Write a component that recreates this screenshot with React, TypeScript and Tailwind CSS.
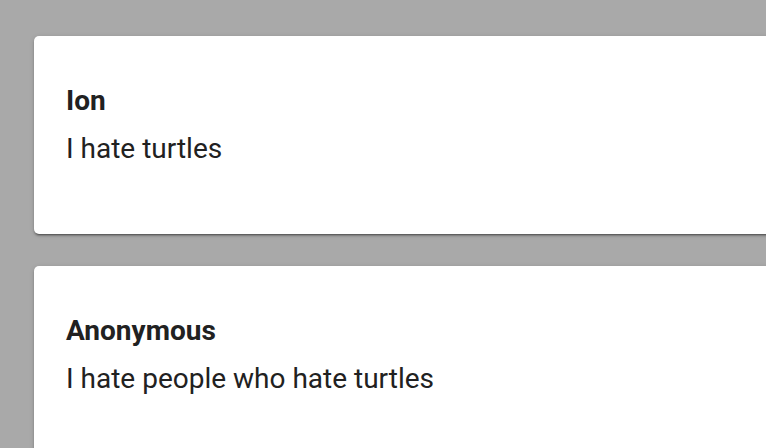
const comments = [
  { author: "Ion", text: "I hate turtles" },
  { author: "Anonymous", text: "I hate people who hate turtles" },
];

export default function App() {
  return (
    <div className="min-h-screen w-screen overflow-hidden bg-[#a9a9a9] pt-9 pl-[34px] font-['Roboto',sans-serif] text-[#212121]">
      <div className="flex w-[820px] flex-col gap-8">
        {comments.map((c, i) => (
          <div
            key={i}
            className="rounded-[5px] bg-white pt-[45px] pb-[65px] pl-8 shadow-[0_2px_2px_0_rgba(0,0,0,0.22),0_3px_1px_-2px_rgba(0,0,0,0.25),0_1px_5px_0_rgba(0,0,0,0.14)]"
          >
            <h3 className="text-[28px] leading-[40px] font-bold">{c.author}</h3>
            <p className="mt-2 text-[28px] leading-[40px]">{c.text}</p>
          </div>
        ))}
      </div>
    </div>
  );
}
